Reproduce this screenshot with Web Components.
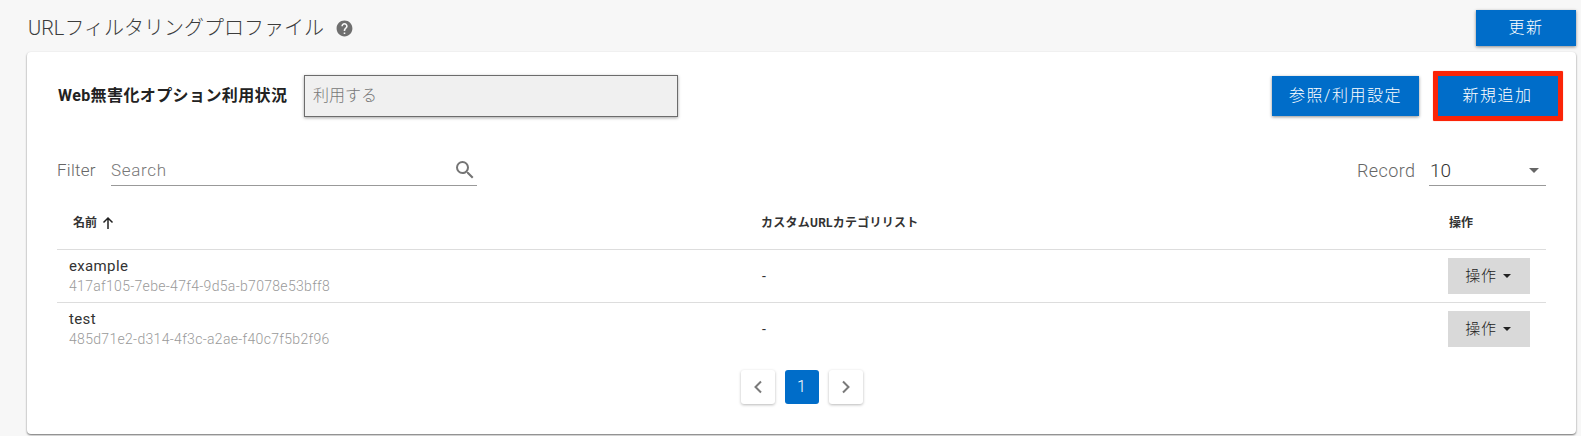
<!DOCTYPE html>
<html lang="ja">
<head>
<meta charset="utf-8">
<title>URLフィルタリングプロファイル</title>
<style>
  html, body { margin: 0; height: 100%; background: #f7f7f7; overflow: hidden; }
  body { font-family: Roboto, "Noto Sans CJK JP", sans-serif; color: #333; }
</style>
</head>
<body>
<profile-page>
  <page-title slot="title">URLフィルタリングプロファイル</page-title>
  <app-button slot="refresh" width="100" height="36">更新</app-button>

  <div slot="status">Web無害化オプション利用状況</div>
  <status-box slot="value">利用する</status-box>
  <app-button slot="actions" width="147" height="40">参照/利用設定</app-button>
  <app-button slot="actions" width="120" height="40" marked>新規追加</app-button>

  <filter-bar slot="filter"></filter-bar>

  <table-head slot="table"></table-head>
  <profile-row slot="table" name="example" uuid="417af105-7ebe-47f4-9d5a-b7078e53bff8"></profile-row>
  <profile-row slot="table" name="test" uuid="485d71e2-d314-4f3c-a2ae-f40c7f5b2f96"></profile-row>

  <page-nav slot="pager"></page-nav>
</profile-page>

<script>
(() => {
  const font = 'Roboto, "Noto Sans CJK JP", sans-serif';
  const columns = '692px 1fr 98px';

  class PageTitle extends HTMLElement {
    constructor() {
      super();
      this.attachShadow({ mode: 'open' }).innerHTML = `
        <style>
          :host { display: flex; align-items: center; gap: 11px; font: 300 20px/1 ${font}; color: #3c3c3c; }
          svg { width: 19px; height: 19px; fill: #6f6f6f; display: block; }
        </style>
        <slot></slot>
        <svg viewBox="0 0 24 24"><path d="M12 2C6.480 2 2 6.480 2 12s4.480 10 10 10 10-4.480 10-10S17.520 2 12 2zm1 17h-2v-2h2v2zm2.070-7.750-.9.920C13.450 12.900 13 13.500 13 15h-2v-.5c0-1.100.450-2.100 1.170-2.830l1.240-1.260c.370-.360.590-.860.590-1.410 0-1.100-.9-2-2-2s-2 .9-2 2H8c0-2.210 1.790-4 4-4s4 1.790 4 4c0 .880-.360 1.680-.930 2.250z"/></svg>`;
    }
  }

  class AppButton extends HTMLElement {
    constructor() {
      super();
      const w = this.getAttribute('width') || 100;
      const h = this.getAttribute('height') || 36;
      this.attachShadow({ mode: 'open' }).innerHTML = `
        <style>
          :host { display: block; }
          :host([marked]) { border: 5px solid #fb2407; border-radius: 1px; margin: -5px 0; box-shadow: 0 0 1px #fb6a55; }
          div {
            width: ${w}px; height: ${h}px; display: flex; align-items: center; justify-content: center;
            background: #006dc9; color: #fff; font: 300 16px/1 ${font}; letter-spacing: 1.5px;
            box-shadow: 0 1px 3px rgba(0,0,0,.45);
          }
          :host([marked]) div { box-shadow: none; padding-right: 1px; width: ${w - 1}px; }
        </style>
        <div><slot></slot></div>`;
    }
  }

  class StatusBox extends HTMLElement {
    constructor() {
      super();
      this.attachShadow({ mode: 'open' }).innerHTML = `
        <style>
          :host {
            display: flex; align-items: center; box-sizing: border-box; width: 374px; height: 42px; padding: 0 8px;
            background: #f0f0f0; border: 1px solid #6c6c6c; box-shadow: 0 1px 3px rgba(0,0,0,.35);
            font: 300 16px/1 ${font}; color: #777;
          }
        </style>
        <slot></slot>`;
    }
  }

  class FilterBar extends HTMLElement {
    constructor() {
      super();
      this.attachShadow({ mode: 'open' }).innerHTML = `
        <style>
          :host { display: flex; align-items: stretch; height: 31px; font: 300 18px/1 ${font}; color: #666; }
          .label { display: flex; align-items: center; width: 54px; font-size: 17px; letter-spacing: .25px; }
          .search { display: flex; align-items: center; justify-content: space-between; width: 366px; border-bottom: 1px solid #999; color: #777; font-size: 17px; letter-spacing: .7px; }
          .search svg { width: 24px; height: 24px; fill: #757575; }
          .spacer { flex: 1; }
          .record { display: flex; align-items: center; width: 72px; font-size: 18px; letter-spacing: .4px; }
          .select { display: flex; align-items: center; justify-content: space-between; width: 117px; padding-left: 1px; box-sizing: border-box; border-bottom: 1px solid #999; color: #333; font-size: 19px; }
          .select i { width: 0; height: 0; border: 5px solid transparent; border-top: 5px solid #666; border-bottom: 0; margin-right: 7px; }
        </style>
        <div class="label">Filter</div>
        <div class="search">
          <span>Search</span>
          <svg viewBox="0 0 24 24"><path d="M15.500 14h-.79l-.28-.27A6.470 6.470 0 0 0 16 9.500 6.500 6.500 0 1 0 9.500 16c1.610 0 3.090-.59 4.230-1.570l.27.280v.79l5 4.990L20.490 19l-4.990-5zm-6 0C7.010 14 5 11.990 5 9.500S7.010 5 9.500 5 14 7.010 14 9.500 11.990 14 9.500 14z"/></svg>
        </div>
        <div class="spacer"></div>
        <div class="record">Record</div>
        <div class="select"><span>10</span><i></i></div>`;
    }
  }

  class TableHead extends HTMLElement {
    constructor() {
      super();
      this.attachShadow({ mode: 'open' }).innerHTML = `
        <style>
          :host {
            display: grid; grid-template-columns: ${columns}; align-items: center; height: 53px; padding-top: 10px;
            border-bottom: 1px solid #ddd; font: 700 12px/1 ${font}; color: #333;
          }
          .name { display: flex; align-items: center; gap: 4px; padding-left: 16px; }
          .name svg { width: 14px; height: 14px; fill: none; stroke: #222; stroke-width: 1.5; }
          .cat { padding-left: 12px; letter-spacing: .25px; }
          .op { padding-left: 1px; }
        </style>
        <div class="name">名前<svg viewBox="0 0 14 14"><path d="M7 13V2M2.500 6.500 7 2l4.500 4.500"/></svg></div>
        <div class="cat">カスタムURLカテゴリリスト</div>
        <div class="op">操作</div>`;
    }
  }

  class ProfileRow extends HTMLElement {
    constructor() {
      super();
      const root = this.attachShadow({ mode: 'open' });
      root.innerHTML = `
        <style>
          :host {
            display: grid; grid-template-columns: ${columns}; align-items: center; height: 52px;
            border-bottom: 1px solid #ddd; font: 400 15px/1 ${font}; color: #333;
          }
          :host(:last-of-type) { border-bottom: 0; }
          .name { padding-left: 12px; letter-spacing: .35px; }
          .uuid { margin-top: 5px; font: 300 14px/1 ${font}; color: #9a9a9a; letter-spacing: .31px; }
          .cat { padding-left: 13px; font-size: 14px; }
          .op {
            width: 82px; height: 36px; padding-right: 2px; box-sizing: border-box; display: flex; align-items: center; justify-content: center; gap: 6px;
            background: #d9d9d9; font-size: 15px; font-weight: 300; letter-spacing: .8px; color: #222;
          }
          .op i { width: 0; height: 0; border: 4px solid transparent; border-top: 4px solid #222; border-bottom: 0; }
        </style>
        <div class="name"><span id="n"></span><div class="uuid" id="u"></div></div>
        <div class="cat">-</div>
        <div class="op">操作<i></i></div>`;
      root.getElementById('n').textContent = this.getAttribute('name');
      root.getElementById('u').textContent = this.getAttribute('uuid');
    }
  }

  class PageNav extends HTMLElement {
    constructor() {
      super();
      this.attachShadow({ mode: 'open' }).innerHTML = `
        <style>
          :host { display: flex; justify-content: center; gap: 10px; }
          div {
            width: 34px; height: 34px; display: flex; align-items: center; justify-content: center; border-radius: 3px;
            background: #fff; box-shadow: 0 1px 3px rgba(0,0,0,.28); font: 300 16px/1 ${font};
          }
          .on { background: #006dc9; color: #fff; box-shadow: none; }
          svg { width: 12px; height: 14px; fill: none; stroke: #7a7a7a; stroke-width: 2; }
        </style>
        <div><svg viewBox="0 0 12 14"><path d="M9 1.500 3.500 7 9 12.500"/></svg></div>
        <div class="on">1</div>
        <div><svg viewBox="0 0 12 14"><path d="M3 1.500 8.500 7 3 12.500"/></svg></div>`;
    }
  }

  class ProfilePage extends HTMLElement {
    constructor() {
      super();
      this.attachShadow({ mode: 'open' }).innerHTML = `
        <style>
          :host { display: block; padding: 10px 5px 0 27px; }
          .top { display: flex; justify-content: space-between; align-items: center; height: 36px; margin-bottom: 6px; padding-left: 1px; }
          .card {
            box-sizing: border-box; height: 382px; padding: 23px 30px 0; background: #fff; border-radius: 4px;
            box-shadow: 0 1px 2px rgba(0,0,0,.55);
          }
          .tools { display: flex; align-items: center; height: 42px; margin: 0 -17px 38px 1px; }
          ::slotted([slot="status"]) { width: 246px; font: 700 16px/1 ${font}; letter-spacing: .4px; color: #222; white-space: nowrap; }
          .actions { margin-left: auto; display: flex; align-items: center; gap: 14px; }
          .pager { margin-top: 15px; }
        </style>
        <div class="top"><slot name="title"></slot><slot name="refresh"></slot></div>
        <div class="card">
          <div class="tools">
            <slot name="status"></slot>
            <slot name="value"></slot>
            <div class="actions"><slot name="actions"></slot></div>
          </div>
          <slot name="filter"></slot>
          <slot name="table"></slot>
          <div class="pager"><slot name="pager"></slot></div>
        </div>`;
    }
  }

  customElements.define('page-title', PageTitle);
  customElements.define('app-button', AppButton);
  customElements.define('status-box', StatusBox);
  customElements.define('filter-bar', FilterBar);
  customElements.define('table-head', TableHead);
  customElements.define('profile-row', ProfileRow);
  customElements.define('page-nav', PageNav);
  customElements.define('profile-page', ProfilePage);
})();
</script>
</body>
</html>
